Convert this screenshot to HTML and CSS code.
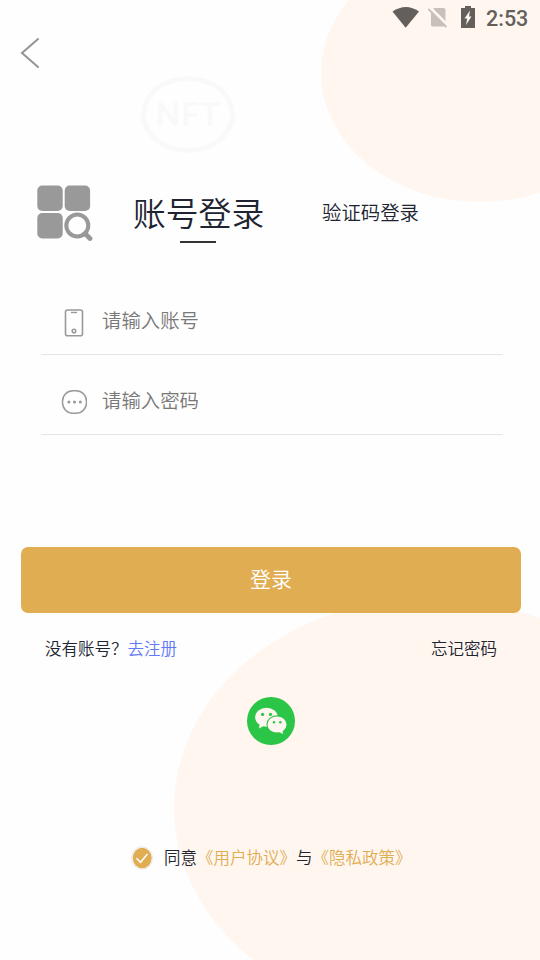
FILE: index.html
```html
<!DOCTYPE html>
<html lang="zh-CN">
<head>
<meta charset="utf-8">
<title>账号登录</title>
<link rel="stylesheet" href="styles.css">
</head>
<body>
<main class="screen">
  <div class="blob blob-top"></div>
  <div class="blob blob-bottom"></div>

  <header class="status">
    <svg class="wifi" width="28" height="22" viewBox="0 0 28 22"><path d="M.5 5.400Q14-3.600 27 5.400L13.700 21.800z" fill="#625f5c"/></svg>
    <svg class="sim" width="20" height="21" viewBox="0 0 20 21"><path d="M6 1h9.500q2 0 2 2v15.500q0 1-1 1h-12q-1.500 0-1.500-1.500V4z" fill="#c8c0bb"/><path d="M1.500 0l20 20" stroke="#fff6ef" stroke-width="3"/><path d="M.3 2l18 18" stroke="#c8c0bb" stroke-width="1.800"/></svg>
    <svg class="battery" width="14" height="22" viewBox="0 0 14 22"><path d="M4 0h6v2h4v20H0V2h4z" fill="#625f5c"/><path d="M9 4.500L3.500 12.500H6.200L5 19l5.500-8.500H8z" fill="#fff6ef"/></svg>
    <span class="time">2:53</span>
  </header>

  <nav class="back">
    <svg width="20" height="32" viewBox="0 0 20 32"><path d="M18 2L2 16l16 14" fill="none" stroke="#949494" stroke-width="2" stroke-linecap="round"/></svg>
  </nav>

  <div class="brand">NFT</div>

  <div class="tabs">
    <svg class="grid-icon" width="56" height="56" viewBox="0 0 56 56">
      <g fill="#999"><rect x=".3" y=".5" width="25.400" height="25.500" rx="5"/><rect x="27.700" y=".5" width="25.400" height="25.500" rx="5"/><rect x=".3" y="28" width="25.400" height="25.500" rx="5"/></g>
      <circle cx="40.300" cy="40.500" r="11" fill="none" stroke="#999" stroke-width="4"/>
      <path d="M48 48.500l5 5" stroke="#999" stroke-width="4.800" stroke-linecap="round"/>
    </svg>
    <div class="tab active">账号登录</div>
    <div class="tab">验证码登录</div>
  </div>

  <form class="form">
    <label class="field">
      <svg width="26" height="28" viewBox="0 0 26 28" fill="none" stroke="#999"><rect x="4.500" y="1" width="17" height="25.700" rx="2" stroke-width="1.600"/><path d="M10 3.500h6" stroke-width="1.400"/><circle cx="13" cy="22" r="1.800" stroke-width="1.500"/></svg>
      <span>请输入账号</span>
    </label>
    <label class="field">
      <svg width="26" height="28" viewBox="0 0 26 28"><rect x="1.500" y="1.700" width="24" height="22.600" rx="10.500" fill="none" stroke="#999" stroke-width="1.500"/><g fill="#999"><circle cx="7.900" cy="13" r="1.500"/><circle cx="13.500" cy="13" r="1.500"/><circle cx="19.300" cy="13" r="1.500"/></g></svg>
      <span>请输入密码</span>
    </label>
  </form>

  <div class="submit">登录</div>

  <div class="links">
    <div>没有账号？<span class="register">去注册</span></div>
    <div>忘记密码</div>
  </div>

  <div class="social">
    <svg width="48" height="48" viewBox="0 0 48 48">
      <circle cx="24" cy="24" r="24" fill="#2bc548"/>
      <path d="M12.500 27l-.4 4.500 5-2.700z" fill="#fff6ef"/>
      <ellipse cx="19.500" cy="20.300" rx="11.300" ry="9.500" fill="#fff6ef"/>
      <ellipse cx="30" cy="27.500" rx="10.600" ry="9.200" fill="#2bc548"/>
      <ellipse cx="30" cy="27.500" rx="9.500" ry="8.100" fill="#fff6ef"/>
      <path d="M31.500 34.800l4.500 2.200-.8-4.500z" fill="#fff6ef"/>
      <g fill="#2bc548"><circle cx="15.600" cy="17.400" r="1.600"/><circle cx="23.500" cy="17.400" r="1.600"/><circle cx="27" cy="25.200" r="1.200"/><circle cx="33.300" cy="25.200" r="1.200"/></g>
    </svg>
  </div>

  <div class="agree">
    <svg width="22" height="24" viewBox="0 0 22 24"><ellipse cx="11" cy="12" rx="10.500" ry="11.300" fill="#fff" stroke="#e9e6e5"/><ellipse cx="11.200" cy="12" rx="9.500" ry="10.300" fill="#e1ad53"/><path d="M5.500 12.300l4 4L16.500 8" fill="none" stroke="#fff" stroke-width="1.500"/></svg>
    <div>同意<span class="doc">《用户协议》</span>与<span class="doc">《隐私政策》</span></div>
  </div>
</main>
</body>
</html>
```
FILE: styles.css
```css
* { box-sizing: border-box; }
body {
  margin: 0;
  background: #fefefe;
  color: #202430;
  font-family: "Noto Sans CJK SC DemiLight", "Noto Sans CJK SC", sans-serif;
  font-weight: 350;
}
svg { display: block; flex: none; }
.screen {
  position: relative;
  z-index: 0;
  width: 540px;
  height: 960px;
  overflow: hidden;
  display: flex;
  flex-direction: column;
}
.blob {
  position: absolute;
  z-index: -1;
  border-radius: 50%;
  background: #fff6ef;
}
.blob-top { left: 321px; top: -56px; width: 318px; height: 258px; }
.blob-bottom { left: 174px; top: 598px; width: 512px; height: 420px; }
.status {
  height: 36px;
  padding: 6px 12px 0 0;
  display: flex;
  justify-content: flex-end;
  align-items: flex-start;
}
.sim { margin: 1px 0 0 8px; }
.battery { margin-left: 13px; }
.time {
  width: 42px;
  margin-left: 11px;
  font: 500 21.500px/26px Roboto, sans-serif;
  color: #625f5c;
  white-space: nowrap;
}
.back { height: 40px; padding: 1px 0 0 20px; }
.brand {
  width: 94px;
  height: 77px;
  margin-left: 141px;
  border: 5px solid #f9f9f9;
  border-radius: 50%;
  color: #f9f9f9;
  font: 700 32px/66px Lato, sans-serif;
  letter-spacing: 1px;
  text-align: center;
}
.tabs {
  height: 61px;
  margin: 32px 0 0 37px;
  display: flex;
}
.tab { margin-left: 58px; font-size: 19.400px; line-height: 54px; }
.tab.active {
  width: 131px;
  margin-left: 40px;
  font-size: 32.800px;
  line-height: 54px;
  white-space: nowrap;
}
.tab.active::after {
  content: "";
  display: block;
  width: 36px;
  height: 2px;
  margin: 2px 0 0 47px;
  background: #333;
}
.form { margin: 29px 37px 0 41px; }
.field {
  height: 80px;
  padding: 34px 0 0 20px;
  display: flex;
  gap: 15px;
  border-bottom: 1px solid #e5e5e5;
  color: #787878;
  font-size: 19.400px;
  line-height: 22px;
}
.submit {
  height: 66px;
  margin: 112px 19px 0 21px;
  border-radius: 7px;
  background: #e1ad53;
  color: #fff;
  font-size: 21px;
  line-height: 62px;
  text-align: center;
}
.links {
  margin: 23px 43px 0 45px;
  display: flex;
  justify-content: space-between;
  font-size: 16.500px;
  line-height: 24px;
}
.register { color: #6279f7; }
.social { margin: 37px 0 0 247px; }
.agree {
  margin: 101px 0 0 131px;
  display: flex;
  gap: 11px;
  font-size: 16.500px;
  line-height: 22px;
}
.doc { color: #e1ad53; }
```
